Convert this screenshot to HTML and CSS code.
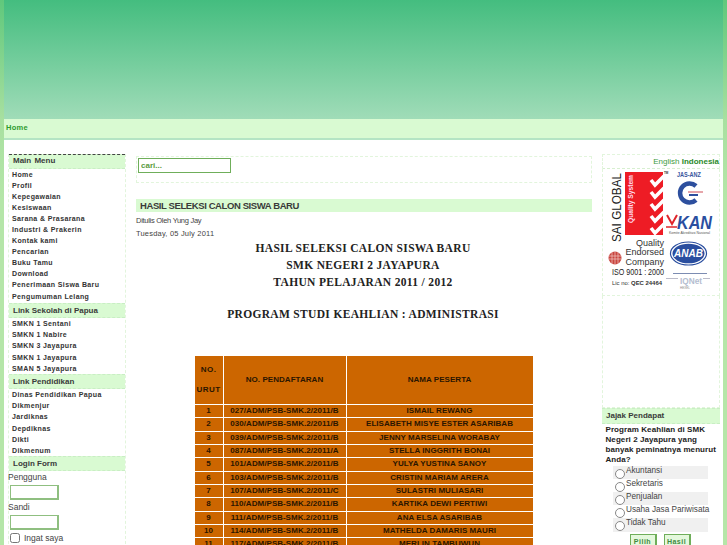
FILE: index.html
```html
<!DOCTYPE html>
<html lang="id">
<head>
<meta charset="utf-8">
<title>SMK Negeri 2 Jayapura</title>
<link rel="stylesheet" href="styles.css">
</head>
<body>
<div class="wrap">
  <header class="banner"></header>
  <nav class="crumbs"><a>Home</a></nav>
  <div class="columns">
    <aside class="left">
      <h3 class="mod first">Main Menu</h3>
      <ul class="menu menu-first">
        <li>Home</li><li>Profil</li><li>Kepegawaian</li><li>Kesiswaan</li><li>Sarana &amp; Prasarana</li><li>Industri &amp; Prakerin</li><li>Kontak kami</li><li>Pencarian</li><li>Buku Tamu</li><li>Download</li><li>Penerimaan Siswa Baru</li><li>Pengumuman Lelang</li>
      </ul>
      <h3 class="mod">Link Sekolah di Papua</h3>
      <ul class="menu">
        <li>SMKN 1 Sentani</li><li>SMKN 1 Nabire</li><li>SMKN 3 Jayapura</li><li>SMKN 1 Jayapura</li><li>SMAN 5 Jayapura</li>
      </ul>
      <h3 class="mod">Link Pendidikan</h3>
      <ul class="menu">
        <li>Dinas Pendidikan Papua</li><li>Dikmenjur</li><li>Jardiknas</li><li>Depdiknas</li><li>Dikti</li><li>Dikmenum</li>
      </ul>
      <h3 class="mod">Login Form</h3>
      <form class="login">
        <label>Pengguna</label>
        <input class="field" type="text">
        <label>Sandi</label>
        <input class="field" type="text">
        <div class="remember"><input type="checkbox"><span>Ingat saya</span></div>
      </form>
    </aside>
    <main class="center">
      <div class="search"><input class="search-input" type="text" value="cari..."></div>
      <h2 class="title">HASIL SELEKSI CALON SISWA BARU</h2>
      <p class="meta author">Ditulis Oleh Yung Jay</p>
      <p class="meta date">Tuesday, 05 July 2011</p>
      <div class="heading">
        <p>HASIL SELEKSI CALON SISWA BARU</p>
        <p>SMK NEGERI 2 JAYAPURA</p>
        <p>TAHUN PELAJARAN 2011 / 2012</p>
        <p class="prog">PROGRAM STUDI KEAHLIAN : ADMINISTRASI</p>
      </div>
      <table class="results">
        <tr class="head"><td class="c1">NO.<br><br>URUT</td><td class="c2">NO. PENDAFTARAN</td><td class="c3">NAMA PESERTA</td></tr>
        <tr><td>1</td><td>027/ADM/PSB-SMK.2/2011/B</td><td>ISMAIL REWANG</td></tr>
        <tr><td>2</td><td>030/ADM/PSB-SMK.2/2011/B</td><td>ELISABETH MISYE ESTER ASARIBAB</td></tr>
        <tr><td>3</td><td>039/ADM/PSB-SMK.2/2011/B</td><td>JENNY MARSELINA WORABAY</td></tr>
        <tr><td>4</td><td>087/ADM/PSB-SMK.2/2011/A</td><td>STELLA INGGRITH BONAI</td></tr>
        <tr><td>5</td><td>101/ADM/PSB-SMK.2/2011/B</td><td>YULYA YUSTINA SANOY</td></tr>
        <tr><td>6</td><td>103/ADM/PSB-SMK.2/2011/B</td><td>CRISTIN MARIAM ARERA</td></tr>
        <tr><td>7</td><td>107/ADM/PSB-SMK.2/2011/C</td><td>SULASTRI MULIASARI</td></tr>
        <tr><td>8</td><td>110/ADM/PSB-SMK.2/2011/B</td><td>KARTIKA DEWI PERTIWI</td></tr>
        <tr><td>9</td><td>111/ADM/PSB-SMK.2/2011/B</td><td>ANA ELSA ASARIBAB</td></tr>
        <tr><td>10</td><td>114/ADM/PSB-SMK.2/2011/B</td><td>MATHELDA DAMARIS MAURI</td></tr>
        <tr><td>11</td><td>117/ADM/PSB-SMK.2/2011/B</td><td>MERLIN TAMBUWUN</td></tr>
      </table>
    </main>
    <aside class="right">
      <div class="lang"><span>English</span> <b>Indonesia</b></div>
      <div class="certs">
        <svg class="cert-svg" width="112" height="124" viewBox="608 170 112 124">
          <defs><clipPath id="red"><rect x="625" y="172" width="38" height="63"/></clipPath></defs>
          <text class="sai" transform="translate(621 242) rotate(-90)" textLength="69" lengthAdjust="spacingAndGlyphs">SAI GLOBAL</text>
          <rect x="625" y="172" width="38" height="63" fill="#ee1c25"/>
          <text class="qs" transform="translate(633 223) rotate(-90)" textLength="48" lengthAdjust="spacingAndGlyphs">Quality System</text>
          <g clip-path="url(#red)" fill="none" stroke="#fff" stroke-width="3.6">
            <path d="M651 180l4 5 9-9"/><path d="M651 192l4 5 9-9"/><path d="M651 204l4 5 9-9"/><path d="M651 216l4 5 9-9"/><path d="M651 228l4 5 9-9"/>
          </g>
          <text class="tm" x="664" y="174">TM</text>
          <text class="jas" x="677" y="177" textLength="24" lengthAdjust="spacingAndGlyphs">JAS-ANZ</text>
          <path d="M696 186a9.5 9.500 0 1 0 0 14" fill="none" stroke="#2d4f9e" stroke-width="4.500"/>
          <path d="M688 192h15" stroke="#d8747c" stroke-width="1.300"/>
          <path d="M689 195h9" stroke="#2d4f9e" stroke-width="2"/>
          <path d="M667 215l5 9 5-9" fill="none" stroke="#e0242a" stroke-width="2"/>
          <path d="M666 227h11" stroke="#e0242a" stroke-width="1.500"/>
          <text class="kan" x="677" y="229" textLength="35" lengthAdjust="spacingAndGlyphs">KAN</text>
          <text class="kan-s" x="669" y="234" textLength="41" lengthAdjust="spacingAndGlyphs">Komite Akreditasi Nasional</text>
          <text class="quality" x="664" y="246" text-anchor="end">Quality</text>
          <text class="quality" x="664" y="255" text-anchor="end">Endorsed</text>
          <text class="quality" x="664" y="265" text-anchor="end">Company</text>
          <circle cx="615" cy="258" r="6.500" fill="#c8453f"/>
          <path d="M609 256h12M609 259h12M612 252v12M615 251v14M618 252v12" stroke="#f3c9c4" stroke-width=".7"/>
          <text class="iso" x="612" y="275" textLength="52" lengthAdjust="spacingAndGlyphs">ISO 9001 : 2000</text>
          <text class="lic" x="612" y="285" textLength="50" lengthAdjust="spacingAndGlyphs">Lic no: <tspan font-weight="bold">QEC 24464</tspan></text>
          <ellipse cx="688.500" cy="253.500" rx="18" ry="11.500" fill="#fff" stroke="#2a4e9f" stroke-width="1.200"/>
          <ellipse cx="688.500" cy="253.500" rx="16" ry="9.800" fill="#2a4e9f"/>
          <text class="anab" x="688.500" y="257" text-anchor="middle">ANAB</text>
          <path d="M673 273.500h34" stroke="#5a6f9e" stroke-width=".8"/>
          <path d="M666 278.500h12M703 278.500h7" stroke="#aab" stroke-width=".8"/>
          <text class="iq" x="680" y="284" textLength="22" lengthAdjust="spacingAndGlyphs">IQNet</text>
          <text class="iqs" x="680" y="289">HEXEL</text>
        </svg>
      </div>
      <div class="blank"></div>
      <h3 class="mod small">Jajak Pendapat</h3>
      <p class="q">Program Keahlian di SMK Negeri 2 Jayapura yang banyak peminatnya menurut Anda?</p>
      <div class="opts">
        <div class="opt alt"><i></i><span>Akuntansi</span></div>
        <div class="opt"><i></i><span>Sekretaris</span></div>
        <div class="opt alt"><i></i><span>Penjualan</span></div>
        <div class="opt"><i></i><span>Usaha Jasa Pariwisata</span></div>
        <div class="opt alt"><i></i><span>Tidak Tahu</span></div>
      </div>
      <div class="btns"><button type="button">Pilih</button><button type="button">Hasil</button></div>
    </aside>
  </div>
</div>
</body>
</html>
```
FILE: styles.css
```css
* { box-sizing: border-box; }
html, body { margin: 0; height: 545px; overflow: hidden; }
body { background: linear-gradient(#60c87c, #a8e0a0 120px, #b5e6a8 200px); font-family: "Liberation Sans", Arial, sans-serif; }
.wrap { margin: 0 4px; background: #fff; height: 545px; overflow: hidden; }
.banner { height: 119px; background: linear-gradient(#44bd7f, #a0dcb8); }
.crumbs { height: 21px; background: #d9fad2; border-bottom: 2px solid #b4e4c4; padding: 4px 2px 0; font-size: 7.5px; font-weight: bold; color: #2e9b2e; letter-spacing: .3px; line-height: 10px; }
.columns { display: flex; padding: 14px 3px 0 4px; }
.left { width: 118px; flex: none; margin-right: 10px; border: 1px dashed #e2f5dc; border-top: 0; height: 400px; }
.mod { margin: 0; height: 15px; background: #d9fad2; border: 1px dashed #c9eec4; border-width: 1px 0; font-size: 8px; line-height: 13px; padding-left: 4px; color: #3a3a3a; }
.mod.first { border-top: 1px dashed #444; line-height: 12px; word-spacing: 1px; }
.menu { list-style: none; margin: 0; padding: 0 0 .8px 3px; font-size: 7px; font-weight: bold; color: #333; letter-spacing: .38px; }
.menu-first { padding-bottom: 1.8px; }
.menu li { height: 11.05px; line-height: 11px; }
.login { font-size: 8.5px; color: #444; margin-left: -1px; }
.login label { display: block; height: 12px; line-height: 12px; }
.field { display: block; width: 49px; height: 15px; margin: 2px 0 1px 2px; border: 1px solid #8fbf80; border-right-width: 2px; border-bottom-width: 2px; background: #fff; padding: 0; }
.remember { display: flex; align-items: center; gap: 4px; margin-top: 3px; padding-left: 2px; height: 10px; }
.remember input { width: 10px; height: 10px; margin: 0; }
.center { width: 456px; flex: none; margin-right: 10px; }
.search { height: 27px; margin-top: 2px; border: 1px dashed #e2f5dc; padding: 1px; }
.search-input { display: block; width: 93px; height: 15px; border: 1px solid #6fae5a; background: #fff; padding: 0 2px; color: #5b9a3e; font: bold 8px "Liberation Sans", sans-serif; outline: none; }
.title { margin: 16px 0 0; height: 13px; background: #d9fad2; font-size: 9.5px; line-height: 13px; padding-left: 4px; color: #3a3a3a; font-weight: bold; letter-spacing: -.4px; }
.meta { margin: 6px 0 0; font-size: 7.5px; line-height: 7px; color: #444; height: 7px; }
.author { margin-top: 5px; letter-spacing: -.28px; }
.date { letter-spacing: .2px; }
.heading { font-family: "Liberation Serif", serif; font-weight: bold; font-size: 11.5px; color: #222; text-align: center; letter-spacing: .33px; margin-top: 3px; padding-right: 2px; }
.heading p { margin: 0; height: 17px; line-height: 17px; }
.heading .prog { margin-top: 15px; }
.results { border-collapse: separate; border-spacing: 1px; margin: 32px 0 0 57.500px; width: 340px; font-size: 8px; font-weight: bold; color: #2a1500; text-align: center; table-layout: fixed; letter-spacing: .05px; }
.results td { background: #cc6600; padding: 0; height: 12.33px; line-height: 10px; }
.results .head td { height: 48px; }
.results .c1 { width: 28px; letter-spacing: .5px; }
.results .c2 { width: 122px; }
.results .c3 { width: 186px; }
.right { width: 118px; flex: none; }
.lang { height: 15px; border: 1px dashed #e2f5dc; border-bottom: 1px dashed #d7efd0; text-align: right; font-size: 8px; line-height: 13px; color: #3f9c3f; padding-right: 0; }
.lang b { color: #2a8a2a; }
.certs { height: 127px; border: 1px dashed #e2f5dc; border-top: 0; padding: 1px 0 0 5px; overflow: hidden; }
.cert-svg { display: block; }
.sai { font: 12.5px "Liberation Sans", sans-serif; fill: #222; }
.qs { font: bold 7px "Liberation Sans", sans-serif; fill: #fde; }
.tm { font: bold 3px "Liberation Sans", sans-serif; fill: #333; }
.jas { font: bold 6.5px "Liberation Sans", sans-serif; fill: #3a559e; }
.kan { font: italic bold 18px "Liberation Sans", sans-serif; fill: #2a4e9f; }
.kan-s { font: 3.2px "Liberation Sans", sans-serif; fill: #555; }
.quality { font: 9px "Liberation Sans", sans-serif; fill: #333; }
.iso { font: 9px "Liberation Sans", sans-serif; fill: #222; }
.lic { font: 6px "Liberation Sans", sans-serif; fill: #333; }
.anab { font: italic bold 10px "Liberation Sans", sans-serif; fill: #fff; }
.iq { font: bold 9px "Liberation Sans", sans-serif; fill: #b4bdd0; }
.iqs { font: 3px "Liberation Sans", sans-serif; fill: #888; }
.blank { height: 112px; border: 1px dashed #e2f5dc; border-top: 0; }
.small { height: 16px; line-height: 13px; }
.q { margin: .5px 0 0 3.500px; font-size: 8px; font-weight: bold; line-height: 10.3px; color: #222; letter-spacing: .08px; }
.opts { margin: 0 0 0 11px; width: 95px; }
.opt { display: flex; height: 13.2px; padding-left: 2px; font-size: 8.2px; color: #444; line-height: 10px; gap: 1px; white-space: nowrap; }
.opt.alt { background: #f0f0f0; }
.opt i { flex: none; width: 10px; height: 10px; border: 1px solid #888; border-radius: 50%; margin-top: 3px; background: #fff; }
.btns { display: flex; justify-content: center; gap: 7px; margin-top: 2px; padding-right: 2px; }
.btns button { width: 27px; height: 16px; padding: 0; background: #e4f8dc; border: 1px solid #6fae5a; border-right-width: 2px; border-bottom-width: 2px; font: bold 7px "Liberation Sans", sans-serif; color: #3f8a3f; letter-spacing: .5px; }
```
